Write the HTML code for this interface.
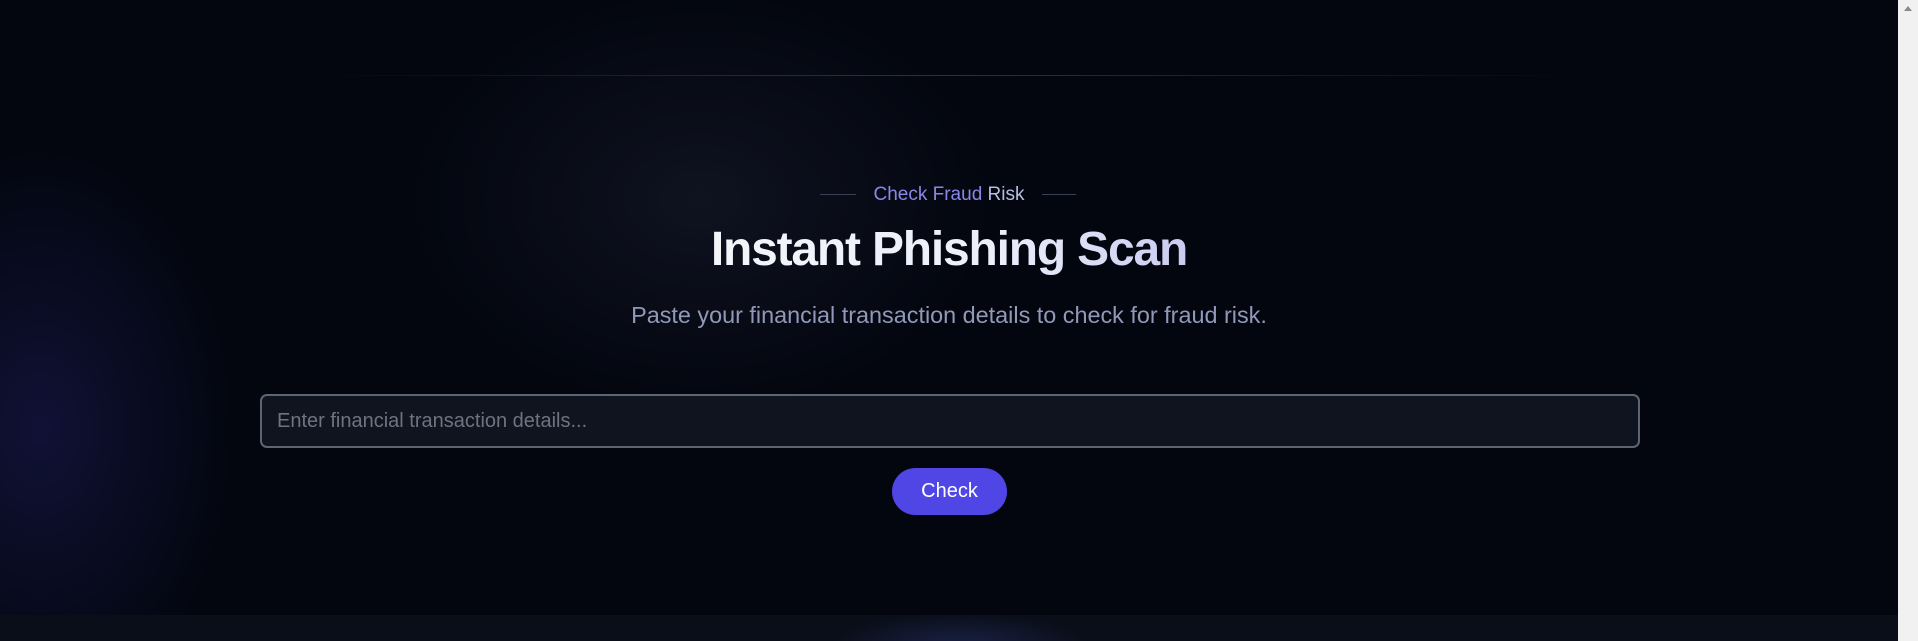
<!DOCTYPE html>
<html><head><meta charset="utf-8"><style>
html,body{margin:0;padding:0;width:1918px;height:641px;overflow:hidden;background:#03060f;font-family:"Liberation Sans",Arial,sans-serif;}
.bg{position:absolute;left:0;top:0;width:1898px;height:641px;background:
radial-gradient(ellipse 260px 380px at 40px 430px,rgba(32,32,100,0.45),transparent 75%),
radial-gradient(ellipse 420px 300px at 700px 200px,rgba(30,34,52,0.45),transparent 70%),
#03060f;}
.topline{position:absolute;left:306px;width:1284px;top:75px;height:1px;background:linear-gradient(90deg,transparent,rgba(120,130,160,0.35),transparent);}
.band{position:absolute;left:0;top:615px;width:1898px;height:26px;background:radial-gradient(ellipse 160px 40px at 960px 30px,rgba(35,45,95,0.6),transparent 80%),#0a0e19;}
.scroll{position:absolute;right:0;top:0;width:20px;height:641px;background:#f1f1f1;}
.scroll:before{content:"";position:absolute;left:6px;top:6px;border-left:4px solid transparent;border-right:4px solid transparent;border-bottom:5px solid #8a8a8a;}
.eyebrow{position:absolute;left:0;width:1898px;top:184px;text-align:center;font-size:19px;color:#8b87e8;}
.eyebrow span.r{color:#b9bde0}
.ln{position:absolute;top:194px;height:1px;background:#3a3f55;}
h1{position:absolute;left:0;width:1898px;top:224px;margin:0;text-align:center;font-size:48px;font-weight:bold;letter-spacing:-1.2px;line-height:52px;}
h1 span{background:linear-gradient(90deg,#f4f5fb,#eceefa 60%,#c9ccf0);-webkit-background-clip:text;background-clip:text;color:transparent;}
.sub{position:absolute;left:0;width:1898px;top:302px;text-align:center;font-size:23.4px;color:#9298b8;}
.inp{position:absolute;left:260px;top:394px;width:1376px;height:50px;border:2px solid #5f6473;border-radius:7px;background:#10141e;}
.inp span{position:absolute;left:15px;top:14px;font-size:20px;color:#6e7382;}
.btn{position:absolute;left:892px;top:468px;width:115px;height:47px;border-radius:24px;background:#4f46e5;color:#fff;font-size:20px;text-align:center;line-height:47px;}
</style></head><body>
<div class="bg"></div>
<div class="topline"></div>
<div class="ln" style="left:820px;width:36px"></div>
<div class="ln" style="left:1042px;width:34px"></div>
<div class="eyebrow">Check <span>Fraud</span> <span class="r">Risk</span></div>
<h1><span>Instant Phishing Scan</span></h1>
<div class="sub">Paste your financial transaction details to check for fraud risk.</div>
<div class="inp"><span>Enter financial transaction details...</span></div>
<div class="btn">Check</div>
<div class="band"></div>
<div class="scroll"></div>
</body></html>
